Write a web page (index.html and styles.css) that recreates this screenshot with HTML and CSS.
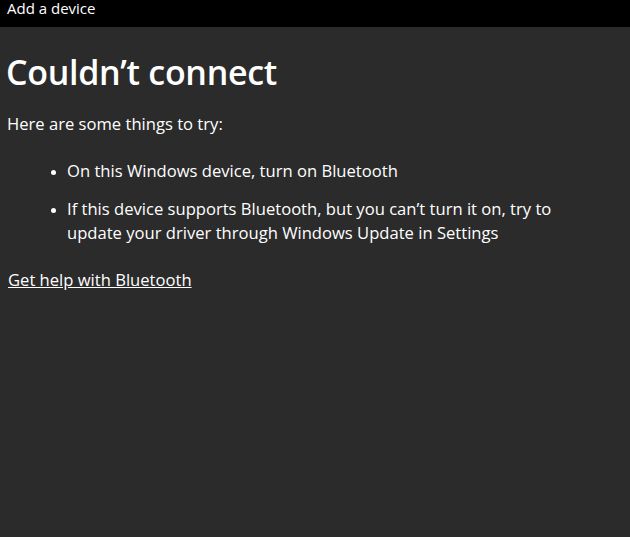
FILE: index.html
```html
<!DOCTYPE html>
<html>
<head>
<meta charset="utf-8">
<link rel="stylesheet" href="styles.css">
</head>
<body>
<div class="titlebar"><span class="title">Add a device</span></div>
<main class="content">
  <h1 class="heading">Couldn’t connect</h1>
  <p class="intro">Here are some things to try:</p>
  <ul class="tips">
    <li>On this Windows device, turn on Bluetooth</li>
    <li>If this device supports Bluetooth, but you can’t turn it on, try to update your driver through Windows Update in Settings</li>
  </ul>
  <a class="help" href="#">Get help with Bluetooth</a>
</main>
</body>
</html>
```
FILE: styles.css
```css
html, body {
  margin: 0;
  padding: 0;
  height: 100%;
}
body {
  background: #2b2b2b;
  color: #ffffff;
  font-family: "Open Sans", "Noto Sans", sans-serif;
}
.titlebar {
  background: #000;
  height: 26px;
  overflow: hidden;
  padding: 1px 0 0 7px;
}
.title {
  display: block;
  font-size: 15px;
  line-height: 15px;
}
.content {
  padding: 0 8px;
}
.heading {
  margin: 25px 0 0 -2px;
  font-size: 34px;
  font-weight: 600;
  line-height: 40px;
  letter-spacing: -0.3px;
}
.intro {
  margin: 20px 0 0 -1px;
  font-size: 16.6px;
  line-height: 24px;
}
.tips {
  margin: 23px 0 0 0;
  padding-left: 59px;
  font-size: 16.6px;
  line-height: 24px;
  max-width: 500px;
}
.tips li {
  margin-bottom: 14px;
}
.tips li::marker {
  font-size: 13px;
}
.help {
  display: inline-block;
  margin-top: 9px;
  color: #ffffff;
  font-size: 16.6px;
  line-height: 24px;
}
```
